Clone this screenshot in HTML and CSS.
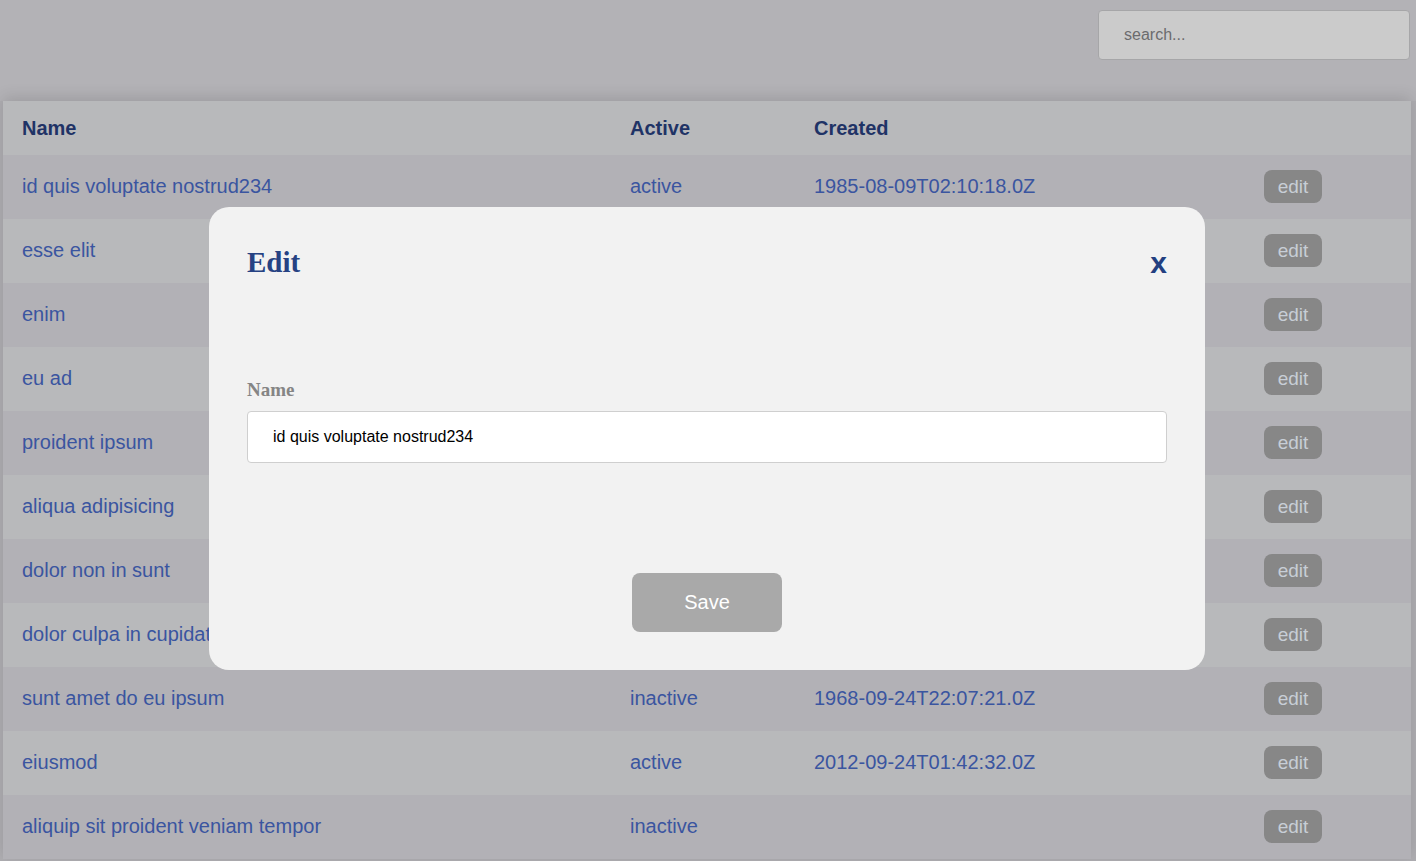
FILE: index.html
```html
<!DOCTYPE html>
<html>
<head>
<meta charset="utf-8">
<title>Items</title>
<link rel="stylesheet" href="styles.css">
</head>
<body>
<div class="page">
  <header class="topbar">
    <input class="search" type="text" placeholder="search...">
  </header>
  <div class="table">
    <div class="row head">
      <div class="cell">Name</div>
      <div class="cell">Active</div>
      <div class="cell">Created</div>
      <div class="cell"></div>
    </div>
    <div class="row odd"><div class="cell">id quis voluptate nostrud234</div><div class="cell">active</div><div class="cell">1985-08-09T02:10:18.0Z</div><div class="cell"><span class="edit">edit</span></div></div>
    <div class="row even"><div class="cell">esse elit</div><div class="cell">active</div><div class="cell">1990-01-01T00:00:00.0Z</div><div class="cell"><span class="edit">edit</span></div></div>
    <div class="row odd"><div class="cell">enim</div><div class="cell">active</div><div class="cell"></div><div class="cell"><span class="edit">edit</span></div></div>
    <div class="row even"><div class="cell">eu ad</div><div class="cell">inactive</div><div class="cell"></div><div class="cell"><span class="edit">edit</span></div></div>
    <div class="row odd"><div class="cell">proident ipsum</div><div class="cell">active</div><div class="cell"></div><div class="cell"><span class="edit">edit</span></div></div>
    <div class="row even"><div class="cell">aliqua adipisicing</div><div class="cell">active</div><div class="cell"></div><div class="cell"><span class="edit">edit</span></div></div>
    <div class="row odd"><div class="cell">dolor non in sunt</div><div class="cell">inactive</div><div class="cell"></div><div class="cell"><span class="edit">edit</span></div></div>
    <div class="row even"><div class="cell">dolor culpa in cupidatat</div><div class="cell">active</div><div class="cell"></div><div class="cell"><span class="edit">edit</span></div></div>
    <div class="row odd"><div class="cell">sunt amet do eu ipsum</div><div class="cell">inactive</div><div class="cell">1968-09-24T22:07:21.0Z</div><div class="cell"><span class="edit">edit</span></div></div>
    <div class="row even"><div class="cell">eiusmod</div><div class="cell">active</div><div class="cell">2012-09-24T01:42:32.0Z</div><div class="cell"><span class="edit">edit</span></div></div>
    <div class="row odd"><div class="cell">aliquip sit proident veniam tempor</div><div class="cell">inactive</div><div class="cell"></div><div class="cell"><span class="edit">edit</span></div></div>
  </div>
</div>

<div class="modal">
  <div class="modal-head">
    <h2 class="modal-title">Edit</h2>
    <span class="close">x</span>
  </div>
  <label class="field-label">Name</label>
  <input class="field" type="text" value="id quis voluptate nostrud234">
  <div class="modal-foot">
    <button class="save">Save</button>
  </div>
</div>
</body>
</html>
```

FILE: styles.css
```css
* { box-sizing: border-box; }
html, body { margin: 0; padding: 0; }
body {
  background: #aeadb1;
  font-family: "Liberation Sans", Arial, sans-serif;
  height: 861px;
  overflow: hidden;
}
.page {
  padding: 0 5px 0 3px;
}
.topbar {
  height: 101px;
  background: #b3b2b6;
  margin: 0 -5px 0 -3px;
  display: flex;
  justify-content: flex-end;
  align-items: flex-start;
  padding: 10px 6px 0 0;
}
.search {
  width: 312px;
  height: 50px;
  background: #cbcbcb;
  border: 1px solid #a6a6a8;
  border-radius: 4px;
  padding: 0 25px;
  font-family: "Liberation Sans", Arial, sans-serif;
  font-size: 16px;
  color: #666;
  outline: none;
}
.search::placeholder { color: #6b6b6e; }
.table {
  box-shadow: 0 -4px 14px rgba(0,0,0,0.12);
  background: #b8b9bb;
}
.row {
  display: grid;
  grid-template-columns: 608px 184px 450px 1fr;
  height: 64px;
  padding-bottom: 2px;
  align-items: center;
  font-size: 20px;
  color: #3a55a0;
}
.row .cell { padding-left: 19px; white-space: nowrap; }
.row.head {
  height: 54px;
  padding-bottom: 0;
  background: #b8b9bb;
  font-weight: bold;
  color: #1f3366;
}
.row.odd { background: #b2b1b6; }
.row.even { background: #b8b9bb; }
.edit {
  display: inline-block;
  width: 58px;
  height: 33px;
  line-height: 33px;
  text-align: center;
  background: #878787;
  color: #c7ced6;
  border-radius: 8px;
  font-size: 19px;
}
.modal {
  position: absolute;
  left: 209px;
  top: 207px;
  width: 996px;
  height: 463px;
  background: #f2f2f2;
  border-radius: 20px;
  padding: 0 38px;
}
.modal-head {
  display: flex;
  justify-content: space-between;
  align-items: flex-start;
  height: 172px;
  padding-top: 39px;
}
.modal-title {
  margin: 0;
  font-family: "Liberation Serif", "Times New Roman", serif;
  font-weight: bold;
  font-size: 29px;
  color: #264283;
}
.close {
  font-family: "Liberation Sans", Arial, sans-serif;
  font-weight: bold;
  font-size: 30px;
  color: #233f80;
  margin-top: 0;
}
.field-label {
  display: block;
  font-family: "Liberation Serif", "Times New Roman", serif;
  font-weight: bold;
  font-size: 19px;
  color: #858585;
  margin-bottom: 10px;
}
.field {
  display: block;
  width: 920px;
  height: 52px;
  background: #fff;
  border: 1px solid #cfcfcf;
  border-radius: 4px;
  padding: 0 25px;
  font-family: "Liberation Sans", Arial, sans-serif;
  font-size: 16px;
  color: #000;
  outline: none;
}
.modal-foot {
  display: flex;
  justify-content: center;
  padding-top: 110px;
}
.save {
  width: 150px;
  height: 59px;
  background: #a9a9a9;
  border: none;
  border-radius: 8px;
  color: #fff;
  font-family: "Liberation Sans", Arial, sans-serif;
  font-size: 20px;
}
```
